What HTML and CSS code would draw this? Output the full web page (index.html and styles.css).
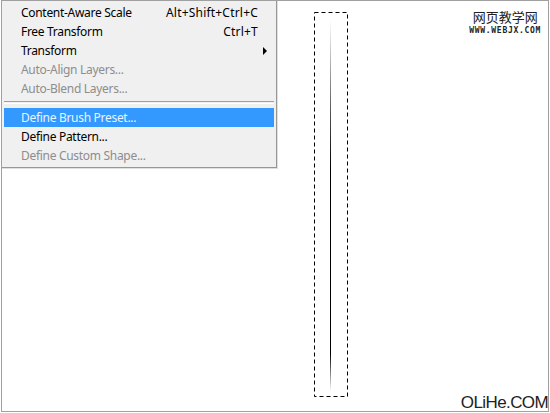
FILE: index.html
```html
<!DOCTYPE html>
<html lang="en">

<head>
    <meta charset="UTF-8" />
    <title>Define Brush Preset</title>
    <link rel="stylesheet" href="styles.css">
</head>

<body>
    <div class="frame">
        <!-- Edit menu -->
        <ul class="menu">
            <li class="item"><span class="label">Content-Aware Scale</span><span class="key">Alt+Shift+Ctrl+C</span><span class="sub"></span></li>
            <li class="item"><span class="label">Free Transform</span><span class="key">Ctrl+T</span><span class="sub"></span></li>
            <li class="item"><span class="label">Transform</span><span class="key"></span><span class="sub"><i class="arrow"></i></span></li>
            <li class="item disabled"><span class="label">Auto-Align Layers...</span><span class="key"></span><span class="sub"></span></li>
            <li class="item disabled"><span class="label">Auto-Blend Layers...</span><span class="key"></span><span class="sub"></span></li>
            <li class="separator"></li>
            <li class="item active"><span class="label">Define Brush Preset...</span><span class="key"></span><span class="sub"></span></li>
            <li class="item"><span class="label">Define Pattern...</span><span class="key"></span><span class="sub"></span></li>
            <li class="item disabled"><span class="label">Define Custom Shape...</span><span class="key"></span><span class="sub"></span></li>
        </ul>

        <!-- selection with the brush stroke -->
        <svg class="selection" width="36" height="387" viewBox="0 0 36 387">
            <defs>
                <linearGradient id="stroke" x1="0" y1="0" x2="0" y2="1">
                    <stop offset="0" stop-color="#fff" />
                    <stop offset="0.25" stop-color="#555" />
                    <stop offset="0.4" stop-color="#000" />
                    <stop offset="0.9" stop-color="#000" />
                    <stop offset="1" stop-color="#fff" />
                </linearGradient>
            </defs>
            <rect x="1.5" y="1.5" width="33" height="384" fill="none" stroke="#000" stroke-dasharray="4 3" />
            <rect x="17" y="9" width="1" height="371" fill="url(#stroke)" />
        </svg>

        <div class="mark-top">
            <div class="mark-cn">网页教学网</div>
            <div class="mark-url">WWW.WEBJX.COM</div>
        </div>
        <div class="mark-bottom">OLiHe.COM</div>
    </div>
</body>

</html>
```

FILE: styles.css
```css
body {
    margin: 0;
    padding: 0;
    background-color: #fff;
    font-family: "Noto Sans", sans-serif;
}

.frame {
    position: relative;
    box-sizing: border-box;
    width: 548px;
    height: 412px;
    margin-left: 1px;
    border: 1px solid #a0a0a0;
    background-color: #fff;
    overflow: hidden;
}

.menu {
    position: absolute;
    left: -1px;
    top: -1px;
    box-sizing: border-box;
    width: 276px;
    height: 168px;
    margin: 0;
    padding: 2px;
    list-style: none;
    background-color: #f0f0f0;
    border: 1px solid #979797;
    border-top: none;
    border-left-color: #c8c8c8;
    box-shadow: 1px 1px 0 #e0e0e0;
    font-size: 12px;
    letter-spacing: -0.3px;
    color: #000;
}

.menu .item:first-child {
    margin-top: 1px;
}

.item {
    display: flex;
    align-items: center;
    height: 19px;
    padding-left: 17px;
    white-space: nowrap;
}

.label {
    flex: 1;
}

.key {
    text-align: right;
    letter-spacing: 0.2px;
}

.sub {
    width: 16px;
    display: flex;
    justify-content: flex-end;
    padding-right: 7px;
    box-sizing: border-box;
}

.arrow {
    width: 0;
    height: 0;
    border-top: 4px solid transparent;
    border-bottom: 4px solid transparent;
    border-left: 4px solid #000;
}

.disabled {
    color: #8d8d8d;
}

.active {
    background-color: #3399ff;
    color: #eaf4ff;
}

.separator {
    height: 1px;
    margin: 3px 0 4px;
    border-top: 1px solid #a0a0a0;
    border-bottom: 1px solid #fff;
}

.selection {
    position: absolute;
    left: 311px;
    top: 10px;
}

.mark-top {
    position: absolute;
    right: 7px;
    top: 8px;
    text-align: center;
    color: #222;
}

.mark-cn {
    font-family: "Noto Sans CJK SC", sans-serif;
    font-size: 13px;
    line-height: 15px;
}

.mark-url {
    margin-top: 3px;
    font-family: "DejaVu Sans Mono", monospace;
    font-size: 8px;
    font-weight: bold;
    line-height: 7px;
    letter-spacing: 0.7px;
}

.mark-bottom {
    position: absolute;
    right: 0;
    bottom: -2px;
    font-family: "Liberation Sans", sans-serif;
    font-size: 17px;
    letter-spacing: -0.6px;
    color: #222;
}
```
